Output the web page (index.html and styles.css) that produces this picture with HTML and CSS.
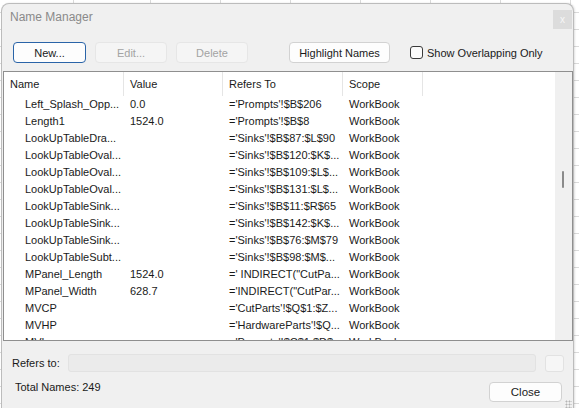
FILE: index.html
```html
<!DOCTYPE html>
<html lang="en">
<head>
    <meta charset="UTF-8">
    <meta name="viewport" content="width=device-width, initial-scale=1.0">
    <title>Name Manager</title>
    <link rel="stylesheet" href="styles.css">
</head>
<body>
    <div class="sheet">
        <div class="dialog">
            <div class="titlebar">
                <span class="title">Name Manager</span>
                <span class="close-x">x</span>
            </div>

            <div class="toolbar">
                <button class="btn btn-default">New...</button>
                <button class="btn" disabled>Edit...</button>
                <button class="btn" disabled>Delete</button>
                <button class="btn btn-wide">Highlight Names</button>
                <label class="check">
                    <span class="box"></span>
                    Show Overlapping Only
                </label>
            </div>

            <div class="names">
                <div class="table">
                    <div class="head">
                        <span>Name</span>
                        <span>Value</span>
                        <span>Refers To</span>
                        <span>Scope</span>
                    </div>
                    <div class="row"><span>Left_Splash_Opp...</span><span>0.0</span><span>='Prompts'!$B$206</span><span>WorkBook</span></div>
                    <div class="row"><span>Length1</span><span>1524.0</span><span>='Prompts'!$B$8</span><span>WorkBook</span></div>
                    <div class="row"><span>LookUpTableDra...</span><span></span><span>='Sinks'!$B$87:$L$90</span><span>WorkBook</span></div>
                    <div class="row"><span>LookUpTableOval...</span><span></span><span>='Sinks'!$B$120:$K$...</span><span>WorkBook</span></div>
                    <div class="row"><span>LookUpTableOval...</span><span></span><span>='Sinks'!$B$109:$L$...</span><span>WorkBook</span></div>
                    <div class="row"><span>LookUpTableOval...</span><span></span><span>='Sinks'!$B$131:$L$...</span><span>WorkBook</span></div>
                    <div class="row"><span>LookUpTableSink...</span><span></span><span>='Sinks'!$B$11:$R$65</span><span>WorkBook</span></div>
                    <div class="row"><span>LookUpTableSink...</span><span></span><span>='Sinks'!$B$142:$K$...</span><span>WorkBook</span></div>
                    <div class="row"><span>LookUpTableSink...</span><span></span><span>='Sinks'!$B$76:$M$79</span><span>WorkBook</span></div>
                    <div class="row"><span>LookUpTableSubt...</span><span></span><span>='Sinks'!$B$98:$M$...</span><span>WorkBook</span></div>
                    <div class="row"><span>MPanel_Length</span><span>1524.0</span><span>=' INDIRECT("CutPa...</span><span>WorkBook</span></div>
                    <div class="row"><span>MPanel_Width</span><span>628.7</span><span>='INDIRECT("CutPar...</span><span>WorkBook</span></div>
                    <div class="row"><span>MVCP</span><span></span><span>='CutParts'!$Q$1:$Z...</span><span>WorkBook</span></div>
                    <div class="row"><span>MVHP</span><span></span><span>='HardwareParts'!$Q...</span><span>WorkBook</span></div>
                    <div class="row"><span>MVL</span><span></span><span>='Prompts'!$C$1:$D$...</span><span>WorkBook</span></div>
                </div>
                <div class="scrollbar"><div class="thumb"></div></div>
            </div>

            <div class="refers">
                <label>Refers to:</label>
                <span class="refers-input"></span>
                <span class="collapse-btn"></span>
            </div>

            <div class="footer">
                <span class="total">Total Names: 249</span>
                <button class="btn btn-close">Close</button>
                <span class="grip"></span>
            </div>
        </div>
    </div>
</body>
</html>
```

FILE: styles.css
```css
* {
    box-sizing: border-box;
}
body {
    margin: 0;
    font-family: "Liberation Sans", Arial, sans-serif;
    font-size: 11px;
    color: #1a1a1a;
}

/* worksheet grid behind the dialog */
.sheet {
    width: 579px;
    height: 408px;
    overflow: hidden;
    padding: 3px 0 0 1px;
    background-color: #fff;
    background-image:
        linear-gradient(#dadada, #dadada),
        repeating-linear-gradient(to right, transparent 0 69px, #dadada 69px 70px),
        repeating-linear-gradient(to bottom, transparent 0 16px, #dadada 16px 17px);
    background-size: 1px 100%, 500px 100%, 100% 100%;
    background-position: 73px 0, 81px 0, 0 -4px;
    background-repeat: no-repeat, no-repeat, repeat;
}

.dialog {
    width: 573px;
    height: 420px;
    background: #f0f0f0;
    border: 1px solid #bcbcbc;
    border-bottom: none;
    border-radius: 8px 8px 0 0;
    box-shadow: 1px 0 2px rgba(0,0,0,0.12);
}

.titlebar {
    display: flex;
    align-items: center;
    height: 26px;
    padding-left: 8px;
}
.title {
    flex: 1;
    font-size: 12px;
    color: #8a8a8a;
}
.close-x {
    align-self: flex-start;
    width: 19px;
    height: 19px;
    margin: 6px 1px 0 0;
    display: flex;
    align-items: center;
    justify-content: center;
    background: #dcdcdc;
    color: #f7f7f7;
    font-size: 10px;
}

.toolbar {
    display: flex;
    align-items: center;
    gap: 9px;
    height: 21px;
    margin-top: 12px;
    padding-left: 11px;
}
.btn {
    width: 72px;
    height: 21px;
    padding: 0;
    font: inherit;
    color: #1a1a1a;
    background: #fdfdfd;
    border: 1px solid #d2d2d2;
    border-radius: 4px;
}
.btn:disabled {
    background: #f5f5f5;
    border-color: #e6e6e6;
    color: #a3a3a3;
}
.btn-default {
    width: 73px;
    border-color: #2a64a8;
}
.btn-wide {
    width: 101px;
    margin-left: 32px;
}
.check {
    display: flex;
    align-items: center;
    gap: 4px;
    margin-left: 11px;
}
.box {
    width: 13px;
    height: 13px;
    border: 1px solid #3a3a3a;
    border-radius: 3px;
    background: #fbfbfb;
}

/* names list */
.names {
    display: flex;
    height: 270px;
    margin: 8px 0 0 1px;
    background: #fff;
    border: 1px solid #8f8f8f;
}
.table {
    flex: 1;
    overflow: hidden;
}
.head,
.row {
    display: grid;
    grid-template-columns: 120px 99px 120px 80px;
}
.head {
    height: 24px;
    line-height: 24px;
}
.head span {
    padding-left: 6px;
    border-right: 1px solid #e5e5e5;
}
.row {
    height: 17px;
    line-height: 17px;
}
.row span {
    padding-left: 6px;
    white-space: nowrap;
    overflow: hidden;
}
.row span:first-child {
    padding-left: 21px;
}
.scrollbar {
    width: 17px;
    background: #f0f0f0;
}
.thumb {
    width: 2px;
    height: 17px;
    margin: 99px 0 0 7px;
    background: #8a8a8a;
    border-radius: 1px;
}

.refers {
    display: flex;
    align-items: center;
    margin-top: 13px;
    padding-left: 10px;
}
.refers label {
    width: 56px;
}
.refers-input {
    width: 468px;
    height: 18px;
    background: #ebebeb;
    border: 1px solid #e2e2e2;
    border-radius: 3px;
}
.collapse-btn {
    width: 19px;
    height: 17px;
    margin-left: 9px;
    background: #f6f6f6;
    border: 1px solid #e2e2e2;
    border-radius: 3px;
}

.footer {
    display: flex;
    align-items: flex-start;
    margin-top: 10px;
    padding-left: 13px;
}
.total {
    flex: 1;
    line-height: 14px;
    margin-top: -2px;
}
.btn-close {
    width: 73px;
    height: 20px;
    font-size: 11.5px;
}
.grip {
    width: 7px;
    height: 8px;
    margin: 18px 1px 0 3px;
    background: radial-gradient(circle, #b4b4b4 0.8px, transparent 1.2px) 0 0 / 3px 3px;
}
```
